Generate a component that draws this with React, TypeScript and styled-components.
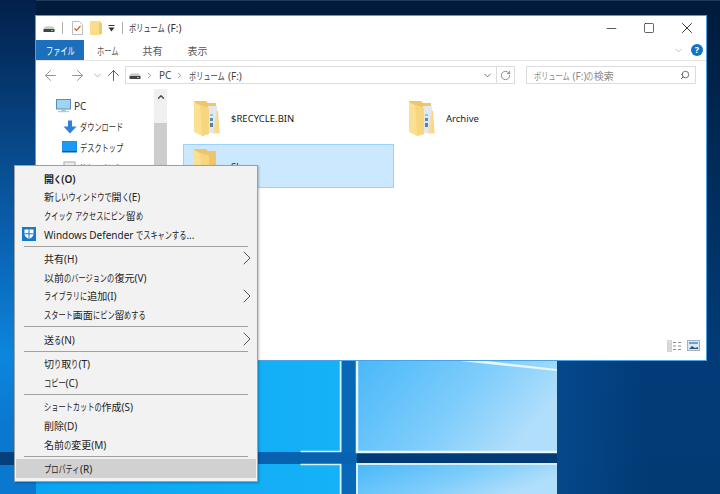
import styled, { createGlobalStyle } from "styled-components";
import { ArrowLeft, ArrowRight, ArrowUp, ChevronDown, ChevronRight, ChevronUp, Minus, RotateCw, Search, Square, X } from "lucide-react";

const uiFont = `"Noto Sans", "Noto Sans CJK JP", sans-serif`;

const Global = createGlobalStyle`
    html, body {
        margin: 0;
        padding: 0;
        background: #012a55;
    }
    * {
        box-sizing: border-box;
    }
`;

const Desktop = styled.div`
    position: relative;
    width: 720px;
    height: 494px;
    overflow: hidden;
    font-family: ${uiFont};
`;

const Wallpaper = styled.svg`
    position: absolute;
    inset: 0;
`;

const Window = styled.div`
    position: absolute;
    left: 35px;
    top: 15px;
    width: 672px;
    height: 346px;
    background: #fff;
    border: 1px solid #4aa3e6;
    display: flex;
    flex-direction: column;
`;

const TitleBar = styled.div`
    height: 24px;
    display: flex;
    align-items: center;
    padding-left: 7px;
    flex-shrink: 0;
`;

const TitleDivider = styled.div<{ $left: number; $right: number }>`
    width: 1px;
    height: 12px;
    background: #b0b0b0;
    margin: 0 ${(p) => p.$right}px 0 ${(p) => p.$left}px;
`;

const TitleSpacer = styled.span<{ $w: number }>`
    width: ${(p) => p.$w}px;
`;

const TitleText = styled.div`
    font-size: 10px;
    color: #333;
    line-height: 14px;
`;

const WindowButtons = styled.div`
    margin-left: auto;
    display: flex;
    align-items: center;
    color: #222;
`;

const WindowButton = styled.div`
    width: 38px;
    height: 24px;
    display: flex;
    align-items: center;
    justify-content: center;
`;

const TabRow = styled.div`
    height: 21px;
    display: flex;
    align-items: stretch;
    border-bottom: 1px solid #e4e4e4;
    flex-shrink: 0;
    padding-right: 3px;
`;

const FileTab = styled.div`
    width: 48px;
    height: 20px;
    background: #1b6fbd;
    color: #fff;
    font-size: 10px;
    display: flex;
    align-items: center;
    justify-content: center;
`;

const Tab = styled.div<{ $first?: boolean }>`
    width: 45px;
    margin-left: ${(p) => (p.$first ? "1px" : "0")};
    height: 20px;
    color: #555;
    font-size: 10px;
    display: flex;
    align-items: center;
    justify-content: center;
`;

const RibbonEnd = styled.div`
    margin-left: auto;
    display: flex;
    align-items: center;
    gap: 7px;
    color: #aaa;
    height: 20px;
`;

const HelpBadge = styled.div`
    width: 12px;
    height: 12px;
    border-radius: 50%;
    background: #1272c8;
    color: #fff;
    font-size: 9px;
    font-weight: 700;
    line-height: 12px;
    text-align: center;
`;

const AddressRow = styled.div`
    height: 28px;
    display: flex;
    align-items: center;
    padding: 0 10px 0 6px;
    flex-shrink: 0;
`;

const NavButton = styled.div<{ $w: number; $color?: string }>`
    width: ${(p) => p.$w}px;
    display: flex;
    align-items: center;
    color: ${(p) => p.$color ?? "#8a8a8a"};
`;

const AddressBox = styled.div`
    width: 390px;
    height: 18px;
    border: 1px solid #dcdcdc;
    display: flex;
    align-items: center;
    padding-left: 3px;
    font-size: 10px;
    color: #444;
`;

const Crumb = styled.span`
    margin: 0 4px 0 5px;
`;

const CrumbArrow = styled.span<{ $first?: boolean }>`
    display: flex;
    color: #777;
    margin-left: ${(p) => (p.$first ? "4px" : "0")};
`;

const AddressTools = styled.div`
    margin-left: auto;
    height: 100%;
    display: flex;
    align-items: center;
    color: #666;
`;

const AddressTool = styled.div<{ $divided?: boolean }>`
    width: 18px;
    height: 100%;
    display: flex;
    align-items: center;
    justify-content: center;
    border-left: ${(p) => (p.$divided ? "1px solid #dcdcdc" : "none")};
`;

const SearchBox = styled.div`
    width: 170px;
    height: 18px;
    margin-left: auto;
    border: 1px solid #dcdcdc;
    display: flex;
    align-items: center;
    justify-content: space-between;
    padding: 0 5px 0 7px;
    font-size: 10px;
    color: #8a8a8a;
`;

const SearchGlyph = styled(Search)`
    transform: scaleX(-1);
    color: #555;
`;

const Body = styled.div`
    flex: 1;
    display: flex;
    min-height: 0;
`;

const Sidebar = styled.div`
    width: 118px;
    padding-top: 7px;
    display: flex;
    flex-direction: column;
    font-size: 10px;
    color: #333;
`;

const NavRow = styled.div<{ $indent: number }>`
    height: 20.5px;
    display: flex;
    align-items: center;
    gap: 3px;
    padding-left: ${(p) => p.$indent}px;
`;

const ScrollTrack = styled.div`
    width: 13px;
    background: #f0f0f0;
    display: flex;
    flex-direction: column;
    align-items: center;
    color: #444;
`;

const ScrollArrow = styled.div`
    height: 34px;
    padding-top: 3px;
    display: flex;
    justify-content: center;
`;

const ScrollThumb = styled.div`
    width: 100%;
    flex: 1;
    background: #cdcdcd;
`;

const FileArea = styled.div`
    flex: 1;
    padding: 7px 0 0 16px;
    display: grid;
    grid-template-columns: 215px 215px;
    grid-auto-rows: 44px;
    row-gap: 4px;
    align-content: start;
`;

const FileItem = styled.div<{ $selected?: boolean }>`
    width: 211px;
    height: 44px;
    display: flex;
    align-items: center;
    gap: 11px;
    padding-left: 9px;
    font-size: 9.5px;
    color: #222;
    background: ${(p) => (p.$selected ? "#cce8ff" : "transparent")};
    border: 1px solid ${(p) => (p.$selected ? "#99d1ff" : "transparent")};
`;

const StatusBar = styled.div`
    height: 20px;
    display: flex;
    align-items: flex-start;
    justify-content: flex-end;
    gap: 5px;
    padding-right: 6px;
    flex-shrink: 0;
`;

const Menu = styled.div`
    position: absolute;
    left: 14px;
    top: 165px;
    width: 244px;
    height: 317px;
    background: #f2f2f2;
    border: 1px solid #a0a0a0;
    padding: 3px 1px 2px;
    box-shadow: 1px 1px 2px rgba(0, 0, 0, 0.25);
    z-index: 5;
`;

const MenuRow = styled.div<{ $active?: boolean; $strong?: boolean }>`
    position: relative;
    height: 18.6px;
    padding-left: 28px;
    display: flex;
    align-items: center;
    font-size: 10px;
    color: #222;
    font-weight: ${(p) => (p.$strong ? 600 : 400)};
    background: ${(p) => (p.$active ? "#d1d1d1" : "transparent")};
    white-space: nowrap;
`;

const MenuIcon = styled.span`
    position: absolute;
    left: 6px;
    top: 2px;
    display: flex;
`;

const MenuArrow = styled.span`
    position: absolute;
    right: -3px;
    top: -3px;
    display: flex;
    color: #555;
`;

const MenuSeparator = styled.div`
    height: 6px;
    display: flex;
    align-items: center;
    padding: 0 8px;

    &::before {
        content: "";
        flex: 1;
        height: 1px;
        background: #a0a0a0;
    }
`;

// the reference face has narrow kana next to full width kanji
const KANA_WIDTH = 0.72;

const KanaRun = styled.span<{ $len: number }>`
    display: inline-block;
    width: ${(p) => (p.$len * KANA_WIDTH).toFixed(2)}em;
    transform: scaleX(${KANA_WIDTH});
    transform-origin: left center;
    white-space: nowrap;
`;

function Jp({ text }: { text: string }) {
    const runs = text.match(/[\u3040-\u30ff]+|[^\u3040-\u30ff]+/g) ?? [];
    return (
        <span>
            {runs.map((run, i) =>
                /[\u3040-\u30ff]/.test(run) ? <KanaRun key={i} $len={run.length}>{run}</KanaRun> : run
            )}
        </span>
    );
}

function DriveIcon({ size = 12 }: { size?: number }) {
    return (
        <svg width={size} height={size} viewBox="0 0 12 12">
            <path d="M2 4.500h8l1.500 2.500h-11z" fill="#c8c8c8" />
            <rect x="0.500" y="7" width="11" height="3" fill="#444" />
            <rect x="8" y="8" width="2" height="1" fill="#6fdc6f" />
        </svg>
    );
}

function NoteIcon() {
    return (
        <svg width="11" height="14" viewBox="0 0 11 14">
            <path d="M0.500 0.500h7l3 3v10h-10z" fill="#fff" stroke="#bdbdbd" />
            <path d="M2.500 7.500l2 2 4-4.500" fill="none" stroke="#d0552c" strokeWidth="1.200" />
        </svg>
    );
}

function SmallFolder() {
    return (
        <svg width="12" height="14" viewBox="0 0 12 14">
            <rect x="0" y="0" width="11" height="14" fill="#fbdc8a" />
            <rect x="9" y="2" width="3" height="11" fill="#efc96e" />
        </svg>
    );
}

function QuickAccessArrow() {
    return (
        <svg width="7" height="7" viewBox="0 0 7 7">
            <rect x="0.500" y="0" width="6" height="1" fill="#333" />
            <path d="M0.500 2.500h6L3.500 6.500z" fill="#333" />
        </svg>
    );
}

function PcIcon() {
    return (
        <svg width="15" height="14" viewBox="0 0 15 14">
            <rect x="0.500" y="0.500" width="14" height="9.500" fill="#9fd4f5" stroke="#5b8fb5" />
            <rect x="5.500" y="10" width="4" height="2" fill="#a9bccb" />
            <rect x="2" y="12" width="11" height="1.200" fill="#b9c8d4" />
        </svg>
    );
}

function DownloadIcon() {
    return (
        <svg width="14" height="14" viewBox="0 0 14 14">
            <path d="M5 0.500h4v6h4.500L7 13.500 0.500 6.500H5z" fill="#2f80d8" />
        </svg>
    );
}

function DesktopIcon() {
    return (
        <svg width="15" height="12" viewBox="0 0 15 12">
            <rect x="0" y="0" width="15" height="11" fill="#1d8fe6" />
            <rect x="1" y="1" width="13" height="8.500" fill="#1a9cf2" />
            <rect x="0" y="10" width="15" height="1.500" fill="#0e5fa8" />
        </svg>
    );
}

function DocIcon() {
    return (
        <svg width="13" height="14" viewBox="0 0 13 14">
            <rect x="1" y="1" width="11" height="12" fill="#eee" stroke="#aaa" />
        </svg>
    );
}

function FolderIcon({ papers = true }: { papers?: boolean }) {
    return (
        <svg width="27" height="36" viewBox="0 0 27 36">
            <path d="M1 1h12l2 2h8v29H1z" fill="#eec56b" />
            {papers && (
                <>
                    <path d="M25 11l1.500 22H15V11z" fill="#f6d27e" />
                    <rect x="15" y="6" width="9" height="27" fill="#e3e8ec" />
                    <rect x="17" y="14" width="3" height="2" fill="#9cbfe0" />
                    <rect x="17" y="18" width="3" height="3" fill="#4f8cc8" />
                    <rect x="17" y="23" width="3" height="4" fill="#5f7f9c" />
                    <path d="M24 9l2.500 24.500H20z" fill="#f8d98a" opacity="0.85" />
                </>
            )}
            <path d="M1 2l6 3 9 3v26l-7 2-8-4z" fill="#fbe093" />
            <path d="M7 5l9 3v26l-7 2z" fill="#f8d680" />
        </svg>
    );
}

function ShieldIcon() {
    return (
        <svg width="14" height="14" viewBox="0 0 14 14">
            <rect width="14" height="14" fill="#1679c9" />
            <path d="M2.500 2.500h9v4.500c0 2.500-2.500 4-4.500 5-2-1-4.500-2.500-4.500-5z" fill="#fff" />
            <path d="M7 2.500v9.500M2.500 6.800h9" stroke="#1679c9" strokeWidth="1" />
        </svg>
    );
}

function DetailsViewIcon() {
    return (
        <svg width="15" height="12" viewBox="0 0 15 12">
            <rect x="0" y="0" width="5" height="12" fill="#d4d4d4" />
            <circle cx="2.500" cy="2" r="1" fill="#eee" />
            <circle cx="2.500" cy="6" r="1" fill="#cfe6f5" />
            <circle cx="2.500" cy="10" r="1" fill="#f0d8d8" />
            <path d="M6 2.500h3M11 2.500h3M6 6h3M11 6h3M6 9.500h3M11 9.500h3" stroke="#8a8a8a" strokeWidth="1" />
        </svg>
    );
}

function ThumbViewIcon() {
    return (
        <svg width="13" height="11" viewBox="0 0 13 11">
            <rect x="0.500" y="0.500" width="12" height="10" fill="#dce7f1" stroke="#9fb2c4" />
            <rect x="2" y="2" width="9" height="2" fill="#5fa7e2" />
            <path d="M2 9l3-3 3 2 3-1v2z" fill="#3c5468" />
        </svg>
    );
}

type MenuEntry =
    | { sep: true }
    | { sep?: false; label: string; arrow?: boolean; strong?: boolean; active?: boolean; shield?: boolean };

const menuEntries: MenuEntry[] = [
    { label: "開く(O)", strong: true },
    { label: "新しいウィンドウで開く(E)" },
    { label: "クイック アクセスにピン留め" },
    { label: "Windows Defender でスキャンする...", shield: true },
    { sep: true },
    { label: "共有(H)", arrow: true },
    { label: "以前のバージョンの復元(V)" },
    { label: "ライブラリに追加(I)", arrow: true },
    { label: "スタート画面にピン留めする" },
    { sep: true },
    { label: "送る(N)", arrow: true },
    { sep: true },
    { label: "切り取り(T)" },
    { label: "コピー(C)" },
    { sep: true },
    { label: "ショートカットの作成(S)" },
    { label: "削除(D)" },
    { label: "名前の変更(M)" },
    { sep: true },
    { label: "プロパティ(R)", active: true },
];

function WallpaperArt() {
    return (
        <Wallpaper width="720" height="494" viewBox="0 0 720 494">
            <defs>
                <linearGradient id="leftCol" x1="0" y1="0" x2="0" y2="1">
                    <stop offset="0" stopColor="#02204a" />
                    <stop offset="0.25" stopColor="#07427f" />
                    <stop offset="0.5" stopColor="#0a63b4" />
                    <stop offset="0.72" stopColor="#0c86de" />
                    <stop offset="0.86" stopColor="#0b78cf" />
                    <stop offset="1" stopColor="#0b78cf" />
                </linearGradient>
                <linearGradient id="rightBase" x1="0" y1="0" x2="0" y2="1">
                    <stop offset="0" stopColor="#001a3a" />
                    <stop offset="0.3" stopColor="#012a56" />
                    <stop offset="0.72" stopColor="#023c78" />
                    <stop offset="1" stopColor="#023a74" />
                </linearGradient>
                <linearGradient id="rightGlow" x1="0" y1="0" x2="1" y2="0">
                    <stop offset="0" stopColor="#0a5cab" stopOpacity="0.4" />
                    <stop offset="1" stopColor="#0a5cab" stopOpacity="0" />
                </linearGradient>
                <linearGradient id="paneLeft" x1="0" y1="0" x2="1" y2="0">
                    <stop offset="0" stopColor="#0aa4f2" />
                    <stop offset="1" stopColor="#16b2f8" />
                </linearGradient>
                <linearGradient id="paneRight" x1="0" y1="0" x2="1" y2="0.4">
                    <stop offset="0" stopColor="#49b8f9" />
                    <stop offset="0.6" stopColor="#7fcdfb" />
                    <stop offset="1" stopColor="#b0defb" />
                </linearGradient>
            </defs>
            <rect width="720" height="494" fill="url(#rightBase)" />
            <rect x="557" y="361" width="90" height="133" fill="url(#rightGlow)" />
            <rect width="720" height="1" fill="#1f3c5c" />
            <rect width="36" height="494" fill="url(#leftCol)" />
            <rect x="0" y="452" width="36" height="13" fill="#05407c" />
            <rect x="36" y="361" width="306" height="91" fill="url(#paneLeft)" />
            <rect x="36" y="464" width="306" height="30" fill="url(#paneLeft)" />
            <rect x="342" y="361" width="15" height="133" fill="#0868b8" />
            <rect x="36" y="452" width="321" height="12" fill="#0762b0" />
            <rect x="357" y="361" width="200" height="91" fill="url(#paneRight)" />
            <rect x="357" y="464" width="200" height="30" fill="url(#paneRight)" />
            <path d="M357 361v91h200" fill="none" stroke="#e8f6ff" strokeWidth="2.500" />
            <path d="M340.500 361v90.500h-40" fill="none" stroke="#d6f0ff" strokeWidth="1.500" />
            <path d="M357 494v-30h200" fill="none" stroke="#d6f0ff" strokeWidth="2" />
            <path d="M340.500 494v-29.500h-40" fill="none" stroke="#d6f0ff" strokeWidth="1.500" />
            <path d="M460 361l97 10v-2l-70-8z" fill="#e6f6ff" />
        </Wallpaper>
    );
}

export default function App() {
    return (
        <Desktop>
            <Global />
            <WallpaperArt />

            <Window>
                <TitleBar>
                    <DriveIcon />
                    <TitleDivider $left={7} $right={9} />
                    <NoteIcon />
                    <TitleSpacer $w={7} />
                    <SmallFolder />
                    <TitleSpacer $w={6} />
                    <QuickAccessArrow />
                    <TitleDivider $left={7} $right={6} />
                    <TitleText><Jp text="ボリューム (F:)" /></TitleText>
                    <WindowButtons>
                        <WindowButton><Minus size={15} strokeWidth={1.2} /></WindowButton>
                        <WindowButton><Square size={12} strokeWidth={1.4} /></WindowButton>
                        <WindowButton><X size={18} strokeWidth={1.2} /></WindowButton>
                    </WindowButtons>
                </TitleBar>

                <TabRow>
                    <FileTab><Jp text="ファイル" /></FileTab>
                    <Tab $first><Jp text="ホーム" /></Tab>
                    <Tab>共有</Tab>
                    <Tab>表示</Tab>
                    <RibbonEnd>
                        <ChevronDown size={11} strokeWidth={1.5} />
                        <HelpBadge>?</HelpBadge>
                    </RibbonEnd>
                </TabRow>

                <AddressRow>
                    <NavButton $w={26.5}><ArrowLeft size={17} strokeWidth={1.3} /></NavButton>
                    <NavButton $w={23}><ArrowRight size={17} strokeWidth={1.3} /></NavButton>
                    <NavButton $w={13}><ChevronDown size={11} strokeWidth={1.5} /></NavButton>
                    <NavButton $w={20.5} $color="#555"><ArrowUp size={17} strokeWidth={1.3} /></NavButton>
                    <AddressBox>
                        <DriveIcon />
                        <CrumbArrow $first><ChevronRight size={9} /></CrumbArrow>
                        <Crumb>PC</Crumb>
                        <CrumbArrow><ChevronRight size={9} /></CrumbArrow>
                        <Crumb><Jp text="ボリューム (F:)" /></Crumb>
                        <AddressTools>
                            <AddressTool><ChevronDown size={11} strokeWidth={2} /></AddressTool>
                            <AddressTool $divided><RotateCw size={11} strokeWidth={1.6} /></AddressTool>
                        </AddressTools>
                    </AddressBox>
                    <SearchBox>
                        <Jp text="ボリューム (F:)の検索" />
                        <SearchGlyph size={10} strokeWidth={2} />
                    </SearchBox>
                </AddressRow>

                <Body>
                    <Sidebar>
                        <NavRow $indent={20}><PcIcon />PC</NavRow>
                        <NavRow $indent={27}><DownloadIcon /><Jp text="ダウンロード" /></NavRow>
                        <NavRow $indent={26}><DesktopIcon /><Jp text="デスクトップ" /></NavRow>
                        <NavRow $indent={27}><DocIcon /><Jp text="ドキュメント" /></NavRow>
                    </Sidebar>
                    <ScrollTrack>
                        <ScrollArrow><ChevronUp size={10} strokeWidth={3} /></ScrollArrow>
                        <ScrollThumb />
                    </ScrollTrack>
                    <FileArea>
                        <FileItem><FolderIcon />$RECYCLE.BIN</FileItem>
                        <FileItem><FolderIcon />Archive</FileItem>
                        <FileItem $selected><FolderIcon papers={false} />Share</FileItem>
                    </FileArea>
                </Body>

                <StatusBar>
                    <DetailsViewIcon />
                    <ThumbViewIcon />
                </StatusBar>
            </Window>

            <Menu>
                {menuEntries.map((entry, i) =>
                    entry.sep ? (
                        <MenuSeparator key={i} />
                    ) : (
                        <MenuRow key={i} $active={entry.active} $strong={entry.strong}>
                            {entry.shield && <MenuIcon><ShieldIcon /></MenuIcon>}
                            <Jp text={entry.label} />
                            {entry.arrow && <MenuArrow><ChevronRight size={24} strokeWidth={1} /></MenuArrow>}
                        </MenuRow>
                    )
                )}
            </Menu>
        </Desktop>
    );
}
